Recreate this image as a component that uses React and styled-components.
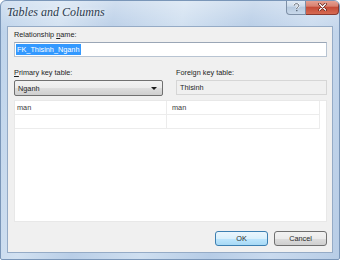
import styled, { createGlobalStyle } from 'styled-components'

const GlobalStyle = createGlobalStyle`
  html, body {
    margin: 0;
    padding: 0;
    background: #ffffff;
  }
  * {
    box-sizing: border-box;
  }
`

const Window = styled.div`
  width: 340px;
  height: 260px;
  display: flex;
  flex-direction: column;
  padding: 0 6px 6px 6px;
  border: 1px solid #7a96b8;
  border-radius: 6px 6px 2px 2px;
  background:
    linear-gradient(180deg, rgba(255, 255, 255, 0.35) 0%, rgba(255, 255, 255, 0) 12%),
    linear-gradient(100deg, #bcd2ea 0%, #d2e1f1 16%, #b9cee7 30%, #cfdff0 48%, #b6cce6 66%, #c9daee 82%, #b8cde6 100%);
  font-family: "Liberation Sans", Arial, sans-serif;
  overflow: hidden;
`

const TitleBar = styled.div`
  height: 25px;
  display: flex;
  justify-content: space-between;
  align-items: flex-start;
`

const Title = styled.div`
  padding: 4px 0 0 0;
  font-family: "Liberation Serif", "Times New Roman", serif;
  font-style: italic;
  font-size: 12px;
  color: #2c3b4d;
  text-shadow: 0 0 4px rgba(255, 255, 255, 0.9);
`

const CaptionButtons = styled.div`
  display: flex;
  margin-top: -1px;
  margin-right: -6px;
`

const CaptionButton = styled.div`
  width: ${p => p.$w}px;
  height: 15px;
  display: flex;
  align-items: center;
  justify-content: center;
  border: 1px solid ${p => (p.$close ? '#8a3a30' : '#7d8fa6')};
  border-top: none;
  border-radius: ${p => (p.$close ? '0 0 4px 0' : '0 0 0 4px')};
  border-left-width: ${p => (p.$close ? 0 : 1)}px;
  background: ${p =>
    p.$close
      ? 'linear-gradient(180deg, #e8a698 0%, #d8806f 45%, #c44a36 50%, #d66a52 100%)'
      : 'linear-gradient(180deg, #e4edf6 0%, #ccdbeb 45%, #b6c9de 50%, #c8d8ea 100%)'};
`

const Client = styled.div`
  flex: 1;
  display: flex;
  flex-direction: column;
  background: #f0f0f0;
  border: 1px solid #95abc6;
  padding: 3px 5px 6px 6px;
  font-size: 7.3px;
  color: #1e1e1e;
`

const Label = styled.div`
  line-height: 9px;
  height: 9px;
  white-space: nowrap;
  u {
    text-decoration: underline;
    text-underline-offset: 1px;
  }
`

const TextBox = styled.div`
  margin-top: 3px;
  height: 15px;
  display: flex;
  align-items: center;
  padding: 0 1px;
  background: #ffffff;
  border: 1px solid #b8c4d2;
  border-top-color: #9aa6b6;
`

const Selected = styled.span`
  background: #3399ff;
  color: #ffffff;
  line-height: 11px;
  padding: 0 2px 0 1px;
`

const Columns = styled.div`
  margin-top: 11px;
  display: grid;
  grid-template-columns: 149px 1fr;
  column-gap: 13px;
`

const Field = styled.div`
  display: flex;
  flex-direction: column;
`

const Combo = styled.div`
  margin-top: 3px;
  height: 16px;
  display: flex;
  align-items: center;
  justify-content: space-between;
  padding: 0 5px 0 3px;
  border: 1px solid #707070;
  border-radius: 2px;
  background: linear-gradient(180deg, #f2f2f2 0%, #ebebeb 50%, #dddddd 51%, #cfcfcf 100%);
`

const Arrow = styled.span`
  width: 0;
  height: 0;
  border-left: 3px solid transparent;
  border-right: 3px solid transparent;
  border-top: 3px solid #1a1a1a;
`

const ReadOnly = styled.div`
  margin-top: 3px;
  height: 15px;
  display: flex;
  align-items: center;
  padding: 0 3px;
  background: #f0f0f0;
  border: 1px solid #d6d6d6;
`

const Grid = styled.div`
  margin-top: 4px;
  height: 122px;
  background: #ffffff;
  border: 1px solid #e8e8e8;
  display: grid;
  grid-template-columns: 152px 153px;
  grid-auto-rows: 14px;
  align-content: start;
`

const Cell = styled.div`
  line-height: 13px;
  color: #3a3a3a;
  padding-left: ${p => (p.$first ? 2 : 5)}px;
  border-bottom: 1px solid #ececec;
  border-right: 1px solid #ececec;
`

const ButtonRow = styled.div`
  margin-top: 9px;
  display: flex;
  justify-content: flex-end;
  gap: 6px;
`

const Button = styled.div`
  width: 53px;
  height: 15px;
  display: flex;
  align-items: center;
  justify-content: center;
  border-radius: 3px;
  color: #2a2a2a;
  border: 1px solid ${p => (p.$default ? '#3c7fb1' : '#707070')};
  background: ${p =>
    p.$default
      ? 'linear-gradient(180deg, #eaf6fd 0%, #d9f0fc 50%, #bee6fd 51%, #a7d9f5 100%)'
      : 'linear-gradient(180deg, #f2f2f2 0%, #ebebeb 50%, #dddddd 51%, #cfcfcf 100%)'};
`

const HelpIcon = () => (
  <svg width="7" height="9" viewBox="0 0 7 9">
    <path d="M1.2 2.6 C1.2 1.3 2.2 0.7 3.5 0.7 C4.8 0.7 5.8 1.4 5.8 2.6 C5.8 3.8 4.2 4.2 3.8 5 L3.8 6" fill="none" stroke="#ffffff" strokeWidth="2" />
    <path d="M1.2 2.6 C1.2 1.3 2.2 0.7 3.5 0.7 C4.8 0.7 5.8 1.4 5.8 2.6 C5.8 3.8 4.2 4.2 3.8 5 L3.8 6" fill="none" stroke="#4a5666" strokeWidth="1" />
    <rect x="3.2" y="7" width="1.2" height="1.2" fill="#4a5666" />
  </svg>
)

const CloseIcon = () => (
  <svg width="9" height="8" viewBox="0 0 9 8">
    <path d="M1.5 1 L7.5 7 M7.5 1 L1.5 7" stroke="#5a1a12" strokeWidth="2.6" strokeLinecap="round" />
    <path d="M1.5 1 L7.5 7 M7.5 1 L1.5 7" stroke="#ffffff" strokeWidth="1.4" strokeLinecap="round" />
  </svg>
)

export default function App() {
  return (
    <>
      <GlobalStyle />
      <Window>
        <TitleBar>
          <Title>Tables and Columns</Title>
          <CaptionButtons>
            <CaptionButton $w={20}><HelpIcon /></CaptionButton>
            <CaptionButton $w={33} $close><CloseIcon /></CaptionButton>
          </CaptionButtons>
        </TitleBar>
        <Client>
          <Label>Relationship <u>n</u>ame:</Label>
          <TextBox>
            <Selected>FK_Thisinh_Nganh</Selected>
          </TextBox>
          <Columns>
            <Field>
              <Label><u>P</u>rimary key table:</Label>
              <Combo>
                <span>Nganh</span>
                <Arrow />
              </Combo>
            </Field>
            <Field>
              <Label>Foreign key table:</Label>
              <ReadOnly>Thisinh</ReadOnly>
            </Field>
          </Columns>
          <Grid>
            <Cell $first>man</Cell>
            <Cell>man</Cell>
            <Cell $first></Cell>
            <Cell></Cell>
          </Grid>
          <ButtonRow>
            <Button $default>OK</Button>
            <Button>Cancel</Button>
          </ButtonRow>
        </Client>
      </Window>
    </>
  )
}
